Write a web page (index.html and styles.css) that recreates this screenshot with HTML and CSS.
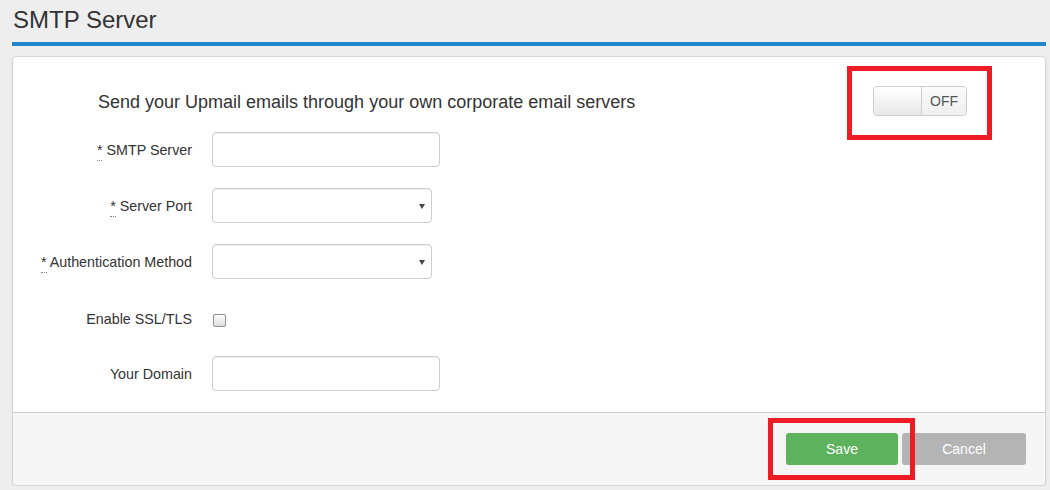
FILE: index.html
```html
<!DOCTYPE html>
<html>
<head>
<meta charset="utf-8">
<link rel="stylesheet" href="styles.css">
</head>
<body>
<div class="page">
  <h1 class="title">SMTP Server</h1>
  <div class="panel">
    <div class="panel-body">
      <div class="intro-row">
        <p class="intro">Send your Upmail emails through your own corporate email servers</p>
        <div class="toggle-wrap">
          <div class="toggle">
            <span class="toggle-handle"></span>
            <span class="toggle-label">OFF</span>
          </div>
          <span class="mark mark-toggle"></span>
        </div>
      </div>
      <div class="form">
        <div class="row">
          <label class="label"><abbr class="req">*</abbr> SMTP Server</label>
          <div class="control"><span class="input input-wide"></span></div>
        </div>
        <div class="row">
          <label class="label"><abbr class="req">*</abbr> Server Port</label>
          <div class="control"><span class="input select"></span></div>
        </div>
        <div class="row">
          <label class="label"><abbr class="req">*</abbr> Authentication Method</label>
          <div class="control"><span class="input select"></span></div>
        </div>
        <div class="row row-check">
          <label class="label">Enable SSL/TLS</label>
          <div class="control"><span class="checkbox"></span></div>
        </div>
        <div class="row">
          <label class="label">Your Domain</label>
          <div class="control"><span class="input input-wide"></span></div>
        </div>
      </div>
    </div>
    <div class="panel-footer">
      <div class="btn-wrap">
        <button class="btn btn-save">Save</button>
        <span class="mark mark-save"></span>
      </div>
      <button class="btn btn-cancel">Cancel</button>
    </div>
  </div>
</div>
</body>
</html>
```

FILE: styles.css
```css
html, body {
  margin: 0;
  padding: 0;
  background: #eeeeee;
  font-family: "Liberation Sans", Arial, sans-serif;
  color: #333333;
}
.page {
  padding: 0 4px 0 12px;
}
.title {
  margin: 0;
  padding: 6px 0 8px 1px;
  font-size: 24px;
  font-weight: normal;
  line-height: 28px;
  color: #333;
  border-bottom: 4px solid #1f86c9;
}
.panel {
  margin-top: 10px;
  background: #fff;
  border: 1px solid #d6d6d6;
  border-radius: 4px;
  box-shadow: 0 1px 2px rgba(0,0,0,0.12);
}
.panel-body {
  padding: 29px 0 21px 0;
}
.intro-row {
  display: flex;
  align-items: center;
  height: 30px;
  padding-left: 85px;
  padding-right: 78px;
}
.intro {
  margin: 0;
  flex: 1;
  font-size: 18px;
  line-height: 30px;
  padding-top: 1px;
}
.toggle-wrap {
  position: relative;
}
.toggle {
  display: flex;
  width: 92px;
  height: 28px;
  border: 1px solid #cccccc;
  border-radius: 4px;
  overflow: hidden;
  background: #f3f3f3;
}
.toggle-handle {
  width: 47px;
  border-right: 1px solid #d0d0d0;
  background: linear-gradient(#ffffff, #e8e8e8);
}
.toggle-label {
  flex: 1;
  font-size: 14px;
  line-height: 28px;
  text-align: center;
  color: #555;
  background: linear-gradient(#fbfbfb, #efefef);
}
.mark {
  position: absolute;
  border: 5px solid #ed1c24;
  box-sizing: border-box;
  pointer-events: none;
}
.mark-toggle {
  left: -26px;
  top: -20px;
  width: 145px;
  height: 74px;
}
.form {
  margin-top: 16px;
}
.row {
  display: grid;
  grid-template-columns: 179px 1fr;
  column-gap: 20px;
  align-items: center;
  height: 35px;
  margin-bottom: 21px;
}
.row:last-child {
  margin-bottom: 0;
}
.row-check .label {
  padding-top: 2px;
}
.label {
  text-align: right;
  font-size: 14.3px;
  color: #333;
}
.req {
  text-decoration: none;
  border-bottom: 1px dotted #888;
  padding-bottom: 2px;
}
.control {
  display: flex;
  align-items: center;
}
.input {
  display: block;
  box-sizing: border-box;
  height: 35px;
  border: 1px solid #cccccc;
  border-radius: 4px;
  background: #fff;
  box-shadow: inset 0 1px 1px rgba(0,0,0,0.06);
}
.input-wide {
  width: 228px;
}
.select {
  position: relative;
  width: 220px;
}
.select::after {
  content: "";
  position: absolute;
  right: 6px;
  top: 15px;
  border-left: 3px solid transparent;
  border-right: 3px solid transparent;
  border-top: 5px solid #444;
}
.checkbox {
  display: block;
  width: 11px;
  height: 11px;
  margin: 5px 0 0 1px;
  border: 1px solid #8f8f8f;
  border-radius: 2px;
  background: linear-gradient(#fcfcfc, #dedede);
}
.panel-footer {
  display: flex;
  justify-content: flex-end;
  gap: 4px;
  padding: 20px 19px 20px 0;
  background: #f5f5f5;
  border-top: 1px solid #cfcfcf;
  border-radius: 0 0 4px 4px;
}
.btn-wrap {
  position: relative;
}
.btn {
  display: block;
  height: 32px;
  border: none;
  border-radius: 3px;
  font-family: "Liberation Sans", Arial, sans-serif;
  font-size: 14px;
  color: #fff;
  padding: 0;
}
.btn-save {
  width: 112px;
  background: #5cb25d;
}
.btn-cancel {
  width: 124px;
  background: #b5b4b5;
}
.mark-save {
  left: -18px;
  top: -15px;
  width: 147px;
  height: 62px;
}
```
